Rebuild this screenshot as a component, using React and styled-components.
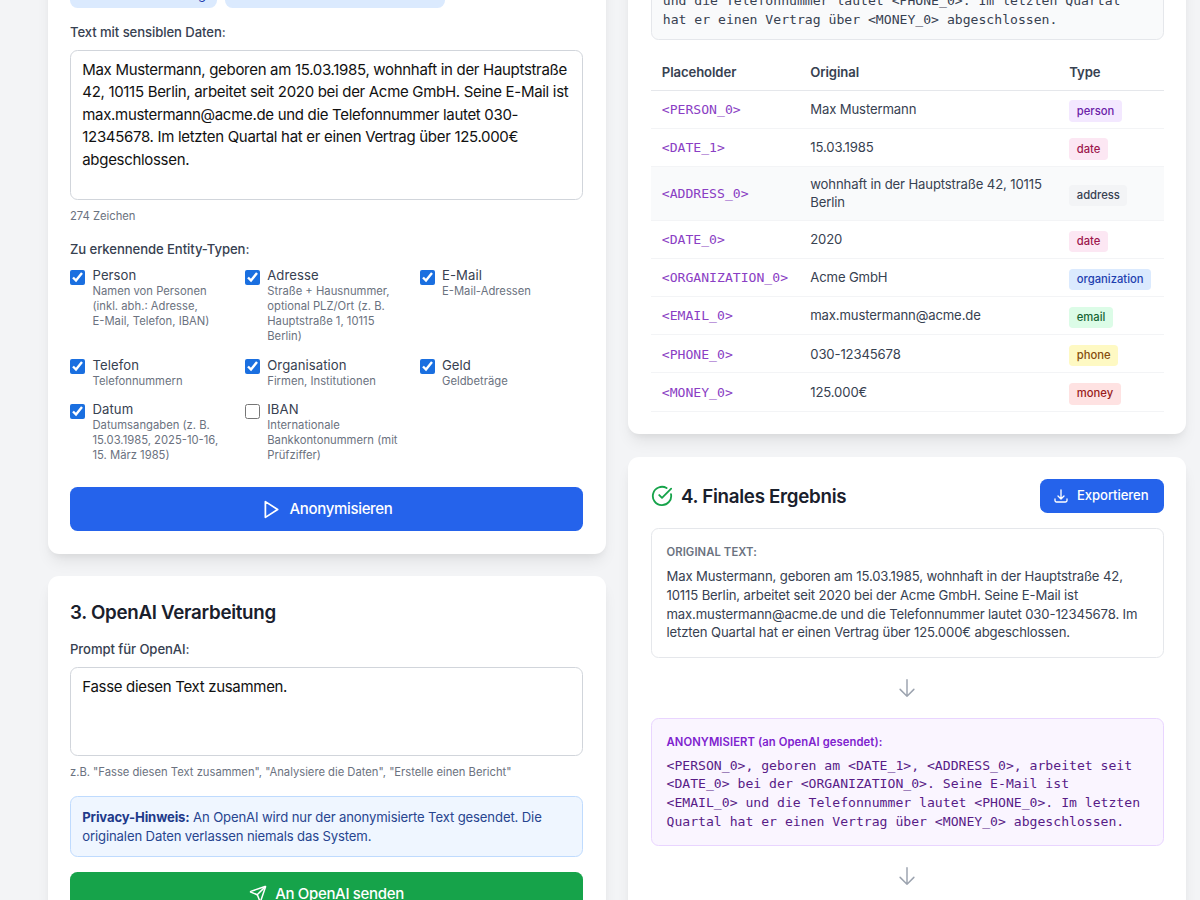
import React from 'react';
import styled, { createGlobalStyle } from 'styled-components';
import { Send, CircleCheckBig } from 'lucide-react';

const Global = createGlobalStyle`
  html { font-size: 15px; }
  body { margin: 0; background: #f3f4f6; font-family: Inter, "Noto Sans", sans-serif; color: #1f2937; line-height: 1.5; }
`;

const Viewport = styled.div`
  height: 900px;
  overflow: hidden;
`;
const Columns = styled.main`
  display: grid;
  grid-template-columns: 558px 558px;
  gap: 22.5px;
  padding-left: 47.5px;
  align-items: start;
`;
const Column = styled.div`
  display: flex;
  flex-direction: column;
  gap: 22.5px;
  margin-top: ${p => p.$offset}px;
`;
const Card = styled.section`
  background: #fff;
  border-radius: 11.25px;
  padding: 22.5px;
  box-shadow: 0 10px 15px -3px rgba(0,0,0,.08), 0 4px 6px -2px rgba(0,0,0,.05);
`;
const Chips = styled.div`
  display: flex;
  gap: 7.5px;
  margin-bottom: 15px;
`;
const Chip = styled.span`
  background: #dbeafe;
  color: #1e40af;
  border-radius: 7.5px;
  padding: 3.75px 11.25px;
  font-size: 13.125px;
  letter-spacing: -0.13px;
`;
const Label = styled.label`
  display: block;
  font-size: 13.125px;
  font-weight: 500;
  letter-spacing: -0.08px;
  color: #374151;
  margin-top: ${p => p.$mt ?? 0}px;
  margin-bottom: 7.5px;
`;
const TextArea = styled.textarea`
  display: block;
  box-sizing: border-box;
  width: 100%;
  height: ${p => p.$h}px;
  padding: 7.5px 11.25px;
  border: 1px solid #d1d5db;
  border-radius: 7.5px;
  font: 15px/22.5px Inter, sans-serif;
  letter-spacing: -0.31px;
  color: #111;
  resize: none;
  outline: none;
  background: #fff;
`;
const Hint = styled.div`
  font-size: 11.25px;
  color: #6b7280;
  margin-top: 8px;
  line-height: 16.9px;
  letter-spacing: -0.02px;
`;
const EntityGrid = styled.div`
  display: grid;
  grid-template-columns: repeat(3, 1fr);
  gap: 11.5px 11.25px;
  margin-top: -0.5px;
`;
const Entity = styled.label`
  display: flex;
  gap: 7.5px;
  align-items: flex-start;
`;
const Check = styled.input.attrs({ type: 'checkbox', readOnly: true })`
  width: 15px;
  height: 15px;
  margin: 3.5px 0 0;
  flex: none;
  accent-color: #1a6fe0;
`;
const EntityName = styled.div`
  font-size: 13.125px;
  line-height: 18px;
  color: #374151;
  letter-spacing: 0.08px;
`;
const EntityDesc = styled.div`
  font-size: 11.25px;
  line-height: 15px;
  color: #6b7280;
`;
const NoWrap = styled.span`
  white-space: nowrap;
`;
const BigButton = styled.button`
  display: flex;
  width: 100%;
  align-items: center;
  justify-content: center;
  gap: ${p => p.$gap}px;
  border: 0;
  border-radius: 7.5px;
  background: ${p => p.$bg};
  color: #fff;
  font: 500 15px/22.5px Inter, sans-serif;
  letter-spacing: -0.33px;
  padding: 11px;
  margin-top: ${p => p.$mt}px;
`;
const Title = styled.h2`
  margin: 0;
  font-size: 18.75px;
  line-height: 28px;
  font-weight: 600;
  letter-spacing: -0.3px;
  color: #1a202c;
`;
const CardTitle = styled(Title)`
  margin-bottom: 13px;
`;
const Notice = styled.div`
  margin-top: 15px;
  padding: 10.75px 11.25px;
  background: #eff6ff;
  border: 1px solid #bfdbfe;
  border-radius: 7.5px;
  font-size: 13.125px;
  line-height: 18.75px;
  letter-spacing: -0.13px;
  color: #27458f;
  strong { font-weight: 700; color: #1e3a8a; }
`;
const CodeBox = styled.div`
  background: #f9fafb;
  border: 1px solid #e5e7eb;
  border-radius: 7.5px;
  padding: 12.75px 11.25px 9.75px;
  font: 13.125px/18.75px "DejaVu Sans Mono", monospace;
  color: #374151;
`;
const Table = styled.table`
  width: 100%;
  margin-top: 15px;
  border-collapse: collapse;
  table-layout: fixed;
  font-size: 13.125px;
  color: #374151;
`;
const Th = styled.th`
  width: ${p => p.$w ? p.$w + 'px' : 'auto'};
  text-align: left;
  font-weight: 600;
  letter-spacing: -0.08px;
  padding: 8.25px 11.25px 6.75px;
  border-bottom: 1px solid #e5e7eb;
`;
const Tr = styled.tr`
  background: ${p => p.$hover ? '#f9fafb' : 'transparent'};
  border-bottom: 1px solid #f3f4f6;
`;
const Td = styled.td`
  padding: 7.85px 11.25px;
  line-height: 18.75px;
  letter-spacing: -0.13px;
  vertical-align: middle;
`;
const TypeTd = styled(Td)`
  padding: 9.7px 11.25px 6px;
`;
const Placeholder = styled.code`
  font: 13.125px "DejaVu Sans Mono", monospace;
  letter-spacing: 0;
  color: #8a3ec4;
`;
const badgeColors = {
  person: ['#f3e8ff', '#6b21a8'],
  date: ['#fce7f3', '#9d174d'],
  address: ['#f3f4f6', '#374151'],
  organization: ['#dbeafe', '#1e40af'],
  email: ['#dcfce7', '#166534'],
  phone: ['#fef9c3', '#854d0e'],
  money: ['#fee2e2', '#991b1b'],
};
const Badge = styled.span`
  display: inline-block;
  padding: 2.25px 7.5px;
  border-radius: 3.75px;
  font-size: 11.25px;
  font-weight: 500;
  letter-spacing: 0;
  line-height: 16.9px;
  vertical-align: baseline;
  background: ${p => badgeColors[p.$t][0]};
  color: ${p => badgeColors[p.$t][1]};
`;
const ResultHeader = styled.div`
  display: flex;
  align-items: center;
  justify-content: space-between;
  margin-bottom: 15px;
`;
const TitleGroup = styled.div`
  display: flex;
  align-items: center;
  gap: 8.5px;
  h2 { padding-top: 1px; }
  svg { width: 22px; height: 22px; color: #16a34a; }
`;
const SmallButton = styled.button`
  display: flex;
  align-items: center;
  gap: 7.5px;
  border: 0;
  border-radius: 7.5px;
  background: #2563eb;
  color: #fff;
  font: 500 13.125px/19.7px Inter, sans-serif;
  letter-spacing: -0.08px;
  padding: 7.25px 15px 7.25px 13.5px;
`;
const ResultBox = styled.div`
  padding: 15px;
  border-radius: 7.5px;
  border: 1px solid ${p => p.$purple ? '#e9d5ff' : '#e5e7eb'};
  background: ${p => p.$purple ? '#faf5ff' : '#fff'};
`;
const ResultLabel = styled.div`
  font-size: 11.25px;
  line-height: 16.9px;
  font-weight: 600;
  letter-spacing: 0.09px;
  margin-bottom: 6px;
  color: ${p => p.$purple ? '#7e22ce' : '#6b7280'};
`;
const ResultText = styled.div`
  font-size: 13.125px;
  line-height: 18.75px;
  letter-spacing: -0.13px;
  color: #374151;
`;
const ResultMono = styled.div`
  font: 13.125px/18.75px "DejaVu Sans Mono", monospace;
  margin: 1.5px 0 -1.5px;
  color: #581c87;
`;
const ArrowRow = styled.div`
  display: flex;
  justify-content: center;
  padding: 18.75px 0;
  color: #9ca3af;
  svg { display: block; }
`;

const PlayIcon = () => (
  <svg width="21" height="21" viewBox="0 0 24 24" fill="none" stroke="currentColor" strokeWidth="2" strokeLinejoin="round"><path d="M5 3l14 9-14 9V3z" /></svg>
);
const TrayIcon = () => (
  <svg width="16" height="16" viewBox="0 0 24 24" fill="none" stroke="currentColor" strokeWidth="2" strokeLinecap="round" strokeLinejoin="round"><path d="M3 16.5v2.25A2.25 2.25 0 0 0 5.25 21h13.5A2.25 2.25 0 0 0 21 18.75V16.5M16.5 12 12 16.5m0 0L7.5 12m4.5 4.5V3" /></svg>
);
const DownIcon = () => (
  <svg width="22" height="22" viewBox="0 0 24 24" fill="none" stroke="currentColor" strokeWidth="1.6" strokeLinecap="round" strokeLinejoin="round"><path d="M19.5 13.5 12 21m0 0-7.5-7.5M12 21V3" /></svg>
);

const text = 'Max Mustermann, geboren am 15.03.1985, wohnhaft in der Hauptstraße 42, 10115 Berlin, arbeitet seit 2020 bei der Acme GmbH. Seine E-Mail ist max.mustermann@acme.de und die Telefonnummer lautet 030-12345678. Im letzten Quartal hat er einen Vertrag über 125.000€ abgeschlossen.';
const anon = '<PERSON_0>, geboren am <DATE_1>, <ADDRESS_0>, arbeitet seit <DATE_0> bei der <ORGANIZATION_0>. Seine E-Mail ist <EMAIL_0> und die Telefonnummer lautet <PHONE_0>. Im letzten Quartal hat er einen Vertrag über <MONEY_0> abgeschlossen.';

const entities = [
  ['Person', <>Namen von Personen (inkl. abh.: Adresse, <NoWrap>E-Mail,</NoWrap> Telefon, IBAN)</>, true],
  ['Adresse', 'Straße + Hausnummer, optional PLZ/Ort (z. B. Hauptstraße 1, 10115 Berlin)', true],
  ['E-Mail', 'E-Mail-Adressen', true],
  ['Telefon', 'Telefonnummern', true],
  ['Organisation', 'Firmen, Institutionen', true],
  ['Geld', 'Geldbeträge', true],
  ['Datum', 'Datumsangaben (z. B. 15.03.1985, 2025-10-16, 15. März 1985)', true],
  ['IBAN', 'Internationale Bankkontonummern (mit Prüfziffer)', false],
];
const rows = [
  ['<PERSON_0>', 'Max Mustermann', 'person'],
  ['<DATE_1>', '15.03.1985', 'date'],
  ['<ADDRESS_0>', 'wohnhaft in der Hauptstraße 42, 10115 Berlin', 'address'],
  ['<DATE_0>', '2020', 'date'],
  ['<ORGANIZATION_0>', 'Acme GmbH', 'organization'],
  ['<EMAIL_0>', 'max.mustermann@acme.de', 'email'],
  ['<PHONE_0>', '030-12345678', 'phone'],
  ['<MONEY_0>', '125.000€', 'money'],
];

export default function App() {
  return (
    <Viewport>
      <Global />
      <Columns>
        <Column $offset={-41.5}>
          <Card>
            <Chips>
              <Chip>Deutsch - Rechnung</Chip>
              <Chip>Deutsch - Medizinischer Kontext</Chip>
            </Chips>
            <Label>Text mit sensiblen Daten:</Label>
            <TextArea $h={149.5} readOnly value={text} />
            <Hint>274 Zeichen</Hint>
            <Label as="div" $mt={15}>Zu erkennende Entity-Typen:</Label>
            <EntityGrid>
              {entities.map(([name, desc, on]) => (
                <Entity key={name}>
                  <Check checked={on} />
                  <div>
                    <EntityName>{name}</EntityName>
                    <EntityDesc>{desc}</EntityDesc>
                  </div>
                </Entity>
              ))}
            </EntityGrid>
            <BigButton $bg="#2563eb" $mt={23.5} $gap={8}><PlayIcon />Anonymisieren</BigButton>
          </Card>
          <Card>
            <CardTitle>3. OpenAI Verarbeitung</CardTitle>
            <Label>Prompt für OpenAI:</Label>
            <TextArea $h={89} readOnly value="Fasse diesen Text zusammen." />
            <Hint>z.B. "Fasse diesen Text zusammen", "Analysiere die Daten", "Erstelle einen Bericht"</Hint>
            <Notice><strong>Privacy-Hinweis:</strong> An OpenAI wird nur der anonymisierte Text gesendet. Die originalen Daten verlassen niemals das System.</Notice>
            <BigButton $bg="#16a34a" $mt={15} $gap={8}><Send size={18} />An OpenAI senden</BigButton>
          </Card>
        </Column>
        <Column $offset={-82}>
          <Card>
            <CodeBox>{anon}</CodeBox>
            <Table>
              <thead>
                <tr>
                  <Th $w={126}>Placeholder</Th>
                  <Th $w={236.5}>Original</Th>
                  <Th>Type</Th>
                </tr>
              </thead>
              <tbody>
                {rows.map(([ph, orig, type]) => (
                  <Tr key={ph} $hover={ph === '<ADDRESS_0>'}>
                    <Td><Placeholder>{ph}</Placeholder></Td>
                    <Td>{orig}</Td>
                    <TypeTd><Badge $t={type}>{type}</Badge></TypeTd>
                  </Tr>
                ))}
              </tbody>
            </Table>
          </Card>
          <Card>
            <ResultHeader>
              <TitleGroup><CircleCheckBig /><Title>4. Finales Ergebnis</Title></TitleGroup>
              <SmallButton><TrayIcon />Exportieren</SmallButton>
            </ResultHeader>
            <ResultBox>
              <ResultLabel>ORIGINAL TEXT:</ResultLabel>
              <ResultText>{text}</ResultText>
            </ResultBox>
            <ArrowRow><DownIcon /></ArrowRow>
            <ResultBox $purple>
              <ResultLabel $purple>ANONYMISIERT (an OpenAI gesendet):</ResultLabel>
              <ResultMono>{anon}</ResultMono>
            </ResultBox>
            <ArrowRow><DownIcon /></ArrowRow>
          </Card>
        </Column>
      </Columns>
    </Viewport>
  );
}
